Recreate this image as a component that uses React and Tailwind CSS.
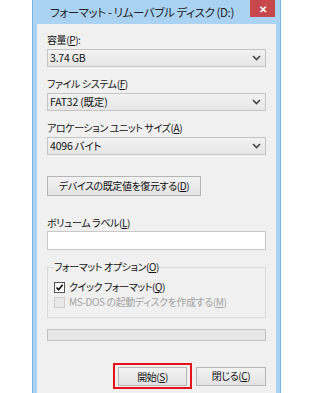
import React from "react";

const font = {
  fontFamily: '"Noto Sans CJK JP", "Noto Sans", sans-serif',
};

const txt = "text-[10px] leading-[14px] tracking-[-0.4px]";

function U({ children }) {
  return <span className="underline underline-offset-[1px]">{children}</span>;
}

function Chevron() {
  return (
    <svg width="9" height="6" viewBox="0 0 9 6" className="shrink-0">
      <path d="M1 1 L4.5 4.5 L8 1" fill="none" stroke="#444" strokeWidth="1.6" />
    </svg>
  );
}

function Select({ value }) {
  return (
    <div className="mt-[2px] flex h-[18px] items-center justify-between border border-[#c4c4c4] bg-gradient-to-b from-[#f2f2f2] to-[#e6e6e6] pl-[2px] pr-[4px] text-[10.5px] leading-[14px] tracking-[-0.2px] text-[#111]">
      <span>{value}</span>
      <Chevron />
    </div>
  );
}

function Label({ children, className = "" }) {
  return (
    <div className={`h-[14px] text-[10px] leading-[14px] tracking-[-0.4px] text-[#111] ${className}`}>
      {children}
    </div>
  );
}

function Button({ children, className = "" }) {
  return (
    <div
      className={`flex h-[19px] items-center justify-center border border-[#b5b5b5] bg-gradient-to-b from-[#f3f3f3] to-[#e3e3e3] text-[10px] leading-[14px] tracking-[-0.4px] text-[#111] ${className}`}
    >
      {children}
    </div>
  );
}

export default function App() {
  return (
    <div
      className="h-[393px] w-[315px] overflow-hidden bg-white [font-feature-settings:'palt']"
      style={font}
    >
      <div className="ml-[32px] flex h-[393px] w-[249px] flex-col border-x border-[#79b5e8] bg-[#a9d2f3]">
        <div className="flex h-[24px] shrink-0 items-start">
          <div className="ml-[17px] mt-[4px] whitespace-nowrap text-[11.5px] leading-[17px] tracking-[-0.4px] text-[#222]">
            フォーマット - リムーバブル ディスク (D:)
          </div>
          <div className="ml-auto mr-[5px] flex h-[17px] w-[25px] shrink-0 items-center justify-center bg-[#c7484c] text-[10px] font-bold leading-none text-white">
            ✕
          </div>
        </div>
        <div className="mx-[4px] flex-1 bg-[#f0f0f0] px-[10px] pt-[9px]">
          <Label>
            容量(<U>P</U>):
          </Label>
          <Select value="3.74 GB" />

          <Label className="mt-[10px]">
            ファイル システム(<U>F</U>)
          </Label>
          <Select value="FAT32 (既定)" />

          <Label className="mt-[10px]">
            アロケーション ユニット サイズ(<U>A</U>)
          </Label>
          <Select value="4096 バイト" />

          <Button className="mt-[21px] h-[20px] w-[154px]">
            デバイスの既定値を復元する(<U>D</U>)
          </Button>

          <Label className="mt-[20px]">
            ボリューム ラベル(<U>L</U>)
          </Label>
          <div className="mt-[1px] h-[19px] border border-[#c8c8c8] bg-white" />

          <fieldset className="mt-[10px] border border-[#dadada] pb-[8px] pl-[6px]">
            <legend className={`h-[14px] text-[#111] ${txt}`}>
              フォーマット オプション(<U>O</U>)
            </legend>
            <div className={`mt-[6px] flex h-[14px] items-center gap-[4px] text-[#111] ${txt}`}>
              <div className="flex h-[11px] w-[11px] items-center justify-center border border-[#555] bg-white">
                <svg width="9" height="9" viewBox="0 0 9 9">
                  <path d="M1.5 4.5 L3.6 6.8 L7.6 1.8" fill="none" stroke="#111" strokeWidth="1.7" />
                </svg>
              </div>
              <span>
                クイック フォーマット(<U>Q</U>)
              </span>
            </div>
            <div className={`mt-[1px] flex h-[14px] items-center gap-[4px] text-[#a3a3a3] ${txt}`}>
              <div className="h-[11px] w-[11px] border border-[#cdcdcd] bg-[#e8e8e8]" />
              <span>
                MS-DOS の起動ディスクを作成する(<U>M</U>)
              </span>
            </div>
          </fieldset>

          <div className="mt-[11px] h-[12px] border border-[#c2c2c2] bg-[#e6e6e6]" />

          <div className="mt-[22px] flex items-center justify-end gap-[4px]">
            <div className="border-2 border-[#e8101a] px-[3px] pb-[1px] pt-[2px]">
              <Button className="w-[69px]">
                開始(<U>S</U>)
              </Button>
            </div>
            <Button className="w-[70px]">
              閉じる(<U>C</U>)
            </Button>
          </div>
        </div>
      </div>
    </div>
  );
}
